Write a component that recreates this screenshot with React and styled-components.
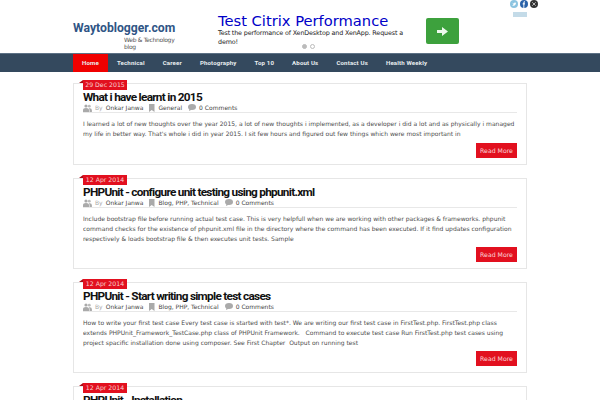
import React from "react";
import styled, { createGlobalStyle } from "styled-components";

const Global = createGlobalStyle`
  html, body { margin: 0; padding: 0; background: #fff; overflow: hidden; }
  body { font-family: "DejaVu Sans", sans-serif; width: 600px; height: 400px; }
`;
const Header = styled.header`
  width: 454px; height: 53px; margin: 0 auto; display: flex; position: relative;
`;
const Brand = styled.div`
  width: 145px; padding-top: 20px; box-sizing: border-box;
`;
const Logo = styled.div`
  font: bold 12.2px/16px "Roboto", sans-serif; color: #2f5585; white-space: nowrap;
`;
const Tagline = styled.div`
  font: 6px/7px "DejaVu Sans", sans-serif; color: #555; margin: 0 0 0 51px; width: 60px; letter-spacing: -0.3px;
`;
const Ad = styled.div`
  width: 208px; padding-top: 12px; position: relative;
`;
const AdTitle = styled.div`
  font: 14.7px/17px "DejaVu Sans", sans-serif; color: #0000c8; white-space: nowrap;
`;
const AdText = styled.div`
  font: 6.4px/9px "DejaVu Sans", sans-serif; letter-spacing: -0.15px; color: #222; width: 190px;
`;
const Dots = styled.div`
  display: flex; gap: 3px; position: absolute; top: 44px; left: 84px;
`;
const Dot = styled.span`
  width: 3px; height: 3px; border-radius: 50%; border: 1px solid #bbb; background: ${p => p.$on ? "#bbb" : "#fff"};
`;
const AdButton = styled.div`
  width: 33px; height: 26px; background: #3da13d; border-radius: 2px; margin: 18px 0 0 0; display: flex; align-items: center; justify-content: center;
`;
const Social = styled.div`
  position: absolute; right: -11px; top: 0; display: flex; flex-direction: column; align-items: flex-end;
`;
const Icons = styled.div`
  display: flex; gap: 2px;
`;
const AdMark = styled.div`
  width: 14px; height: 5px; background: #c4dbe8; margin: 4px 11px 0 0;
`;
const Nav = styled.nav`
  height: 18px; background: #34495e; border-top: 1px solid #5d7185;
`;
const NavInner = styled.div`
  width: 454px; margin: 0 auto; display: flex; height: 18px;
`;
const NavItem = styled.a`
  font: bold 6.1px/18px "Roboto", sans-serif; letter-spacing: 0.15px; color: #e8edf0; padding: 0 9px; white-space: nowrap;
  background: ${p => p.$active ? "#f00000" : "transparent"};
`;
const Main = styled.main`
  width: 454px; margin: 11px auto 0; display: flex; flex-direction: column; gap: 13px;
`;
const Card = styled.article`
  border: 1px solid #e6e6e6; height: ${p => p.$h}px; box-sizing: border-box; padding: 0 9px; position: relative;
`;
const Ribbon = styled.div`
  width: 44px; height: 10px; background: #e2101f; color: #f8d0d0; font: 6.2px/10px "DejaVu Sans", sans-serif; text-align: center; margin-top: -4px; position: relative;
  &::before { content: ""; position: absolute; left: -4px; top: 0; border-bottom: 3px solid #a80c16; border-left: 4px solid transparent; }
`;
const Title = styled.h2`
  font: bold 11.8px/12px "Roboto", sans-serif; letter-spacing: -0.72px; color: #111; margin: 1px 0 0; white-space: nowrap;
`;
const Meta = styled.div`
  display: flex; align-items: center; height: 9px; border-bottom: 1px solid #e8e8e8; font: 6px/9px "DejaVu Sans", sans-serif; color: #444; gap: 6px;
`;
const MetaGroup = styled.span`
  display: flex; align-items: center; gap: 3px;
`;
const Muted = styled.span`
  color: #aaa;
`;
const Body = styled.p`
  font: 6.03px/10px "DejaVu Sans", sans-serif; color: #4c4c4c; margin: 6px 0 0; height: 30px; overflow: hidden; white-space: pre;
`;
const ReadMore = styled.a`
  position: absolute; right: 9px; bottom: 6px; width: 41px; height: 15px; background: #e2101f; color: #fbd8d8; font: 6.2px/15px "DejaVu Sans", sans-serif; text-align: center;
`;

const IconUser = () => <svg width="9" height="8" viewBox="0 0 9 8"><circle cx="3" cy="2" r="1.6" fill="#aaa"/><circle cx="6.3" cy="2.2" r="1.4" fill="#bbb"/><path d="M0 8V6q0-2 3-2t3 2v2zM6.5 8V5.8l-.6-1.5q3-.5 3 2V8z" fill="#aaa"/></svg>;
const IconMark = () => <svg width="6" height="8" viewBox="0 0 6 8"><path d="M0 0h5.5v8L2.7 6 0 8z" fill="#aaa"/></svg>;
const IconBubble = () => <svg width="8" height="7" viewBox="0 0 8 7"><ellipse cx="4" cy="3" rx="4" ry="3" fill="#aaa"/><path d="M1.5 4.5L1 7l3-1.5z" fill="#aaa"/></svg>;
const Twitter = () => <svg width="8" height="8" viewBox="0 0 8 8"><circle cx="4" cy="4" r="4" fill="#8cc4e0"/><path d="M2 2.5q1 1 2 1 .3-1.2 1.3-.8L6 2.5q0 3-2.5 3.2-1 0-1.5-.5 2 0 1-1.5z" fill="#fff"/></svg>;
const Facebook = () => <svg width="8" height="8" viewBox="0 0 8 8"><circle cx="4" cy="4" r="4" fill="#2a62a8"/><path d="M3.4 8V4.4H2.7V3.2h.7V2.5Q3.4 1.2 5 1.2v1.1q-.7 0-.7.5v.4h.7l-.1 1.2h-.6V8z" fill="#fff"/></svg>;
const Dark = () => <svg width="8" height="8" viewBox="0 0 8 8"><circle cx="4" cy="4" r="4" fill="#333"/><path d="M2.3 2.3l3.4 3.4M5.7 2.3L2.3 5.7" stroke="#bbb" strokeWidth="1"/></svg>;

const posts = [
  { h: 82, date: "29 Dec 2015", title: "What i have learnt in 2015", cat: "General", text: "I learned a lot of new thoughts over the year 2015, a lot of new thoughts i implemented, as a developer i did a lot and as physically i managed\nmy life in better way. That's whole i did in year 2015. I sit few hours and figured out few things which were most important in" },
  { h: 91, date: "12 Apr 2014", title: "PHPUnit - configure unit testing using phpunit.xml", cat: "Blog, PHP, Technical", text: "Include bootstrap file before running actual test case. This is very helpfull when we are working with other packages & frameworks. phpunit\ncommand checks for the existence of phpunit.xml file in the directory where the command has been executed. If it find updates configuration\nrespectively & loads bootstrap file & then executes unit tests. Sample" },
  { h: 91, date: "12 Apr 2014", title: "PHPUnit - Start writing simple test cases", cat: "Blog, PHP, Technical", text: "How to write your first test case Every test case is started with test*. We are writing our first test case in FirstTest.php. FirstTest.php class\nextends PHPUnit_Framework_TestCase.php class of PHPUnit Framework.   Command to execute test case Run FirstTest.php test cases using\nproject spacific installation done using composer. See First Chapter  Output on running test" },
  { h: 91, date: "12 Apr 2014", title: "PHPUnit - Installation", cat: "Blog, PHP, Technical", text: "" },
];
const nav = ["Home","Technical","Career","Photography","Top 10","About Us","Contact Us","Health Weekly"];

export default function App() {
  return (
    <>
      <Global />
      <Header>
        <Brand>
          <Logo>Waytoblogger.com</Logo>
          <Tagline>Web &amp; Technology blog</Tagline>
        </Brand>
        <Ad>
          <AdTitle>Test Citrix Performance</AdTitle>
          <AdText>Test the performance of XenDesktop and XenApp. Request a demo!</AdText>
          <Dots><Dot $on /><Dot /></Dots>
        </Ad>
        <AdButton>
          <svg width="11" height="9" viewBox="0 0 11 9"><path d="M0 3h5V0l6 4.5L5 9V6H0z" fill="#eef8ee"/></svg>
        </AdButton>
        <Social>
          <Icons><Twitter /><Facebook /><Dark /></Icons>
          <AdMark />
        </Social>
      </Header>
      <Nav>
        <NavInner>
          {nav.map((t, i) => <NavItem key={t} $active={i === 0}>{t}</NavItem>)}
        </NavInner>
      </Nav>
      <Main>
        {posts.map(p => (
          <Card key={p.title} $h={p.h}>
            <Ribbon>{p.date}</Ribbon>
            <Title>{p.title}</Title>
            <Meta>
              <MetaGroup><IconUser /><Muted>By</Muted> Onkar Janwa</MetaGroup>
              <MetaGroup><IconMark /> {p.cat}</MetaGroup>
              <MetaGroup><IconBubble /> 0 Comments</MetaGroup>
            </Meta>
            <Body>{p.text}</Body>
            {p.text && <ReadMore>Read More</ReadMore>}
          </Card>
        ))}
      </Main>
    </>
  );
}
